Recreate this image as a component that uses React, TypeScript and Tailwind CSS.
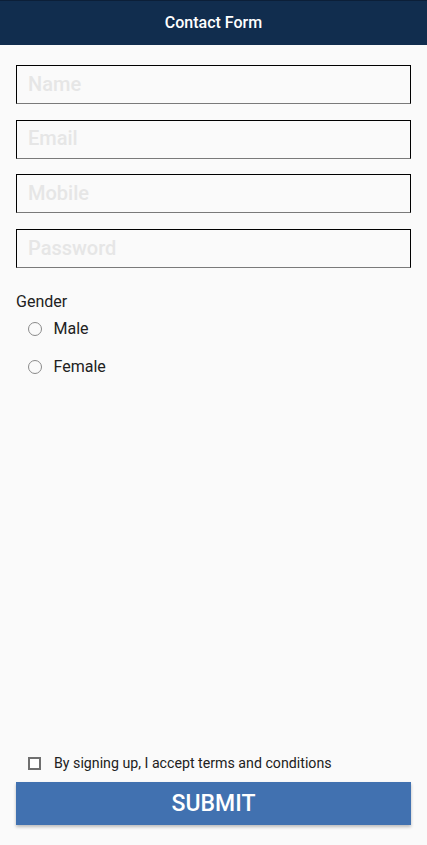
import { useState } from "react";

const fields = ["Name", "Email", "Mobile", "Password"];

export default function App() {
  const [gender, setGender] = useState("");
  const [agree, setAgree] = useState(false);

  return (
    <div className="flex h-[845px] w-full flex-col bg-[#fafafa] font-['Roboto',sans-serif]">
      {/* Header */}
      <div className="flex h-[45px] shrink-0 items-center justify-center border-t border-[#0c1f38] bg-[#112d4e]">
        <span className="text-[16px] font-medium text-white">Contact Form</span>
      </div>

      <div className="flex flex-1 flex-col px-4 pt-[20px]">
        {/* Inputs */}
        <div className="flex flex-col gap-[15.7px]">
          {fields.map((f) => (
            <input
              key={f}
              type={f === "Password" ? "password" : "text"}
              placeholder={f}
              className="h-[39px] w-full border border-black border-b-[#7a7a7a] bg-transparent px-[11px] pb-[2px] text-[20px] font-medium text-[#222] outline-none placeholder:text-[#e6e6e6]"
            />
          ))}
        </div>

        {/* Gender */}
        <div className="mt-[22px] text-[16px] text-[#212121]">Gender</div>
        <div className="mt-[4px] flex flex-col gap-[16px] pl-[12px]">
          {["Male", "Female"].map((g) => (
            <label key={g} className="flex h-[22px] items-center gap-[12px] text-[16px] text-[#212121]">
              <span
                onClick={() => setGender(g)}
                className="flex h-[13.5px] w-[13.5px] items-center justify-center rounded-full border-[1.5px] border-[#8a8a8a]"
              >
                {gender === g && <span className="h-[7px] w-[7px] rounded-full bg-[#4171b0]" />}
              </span>
              {g}
            </label>
          ))}
        </div>

        <div className="flex-1" />

        {/* Terms */}
        <label className="flex items-center gap-[13px] pl-[12px] text-[14.2px] text-[#212121]">
          <span
            onClick={() => setAgree(!agree)}
            className="flex h-[13px] w-[13px] items-center justify-center border-2 border-[#6f6f6f] bg-white"
          >
            {agree && <span className="h-[5px] w-[5px] bg-[#4171b0]" />}
          </span>
          By signing up, I accept terms and conditions
        </label>

        <button className="mt-[8px] mb-[20px] h-[43px] w-full bg-[#4171b0] pt-[2px] text-[23px] font-medium text-white shadow-[0_2px_3px_rgba(0,0,0,0.25)]">
          SUBMIT
        </button>
      </div>
    </div>
  );
}
